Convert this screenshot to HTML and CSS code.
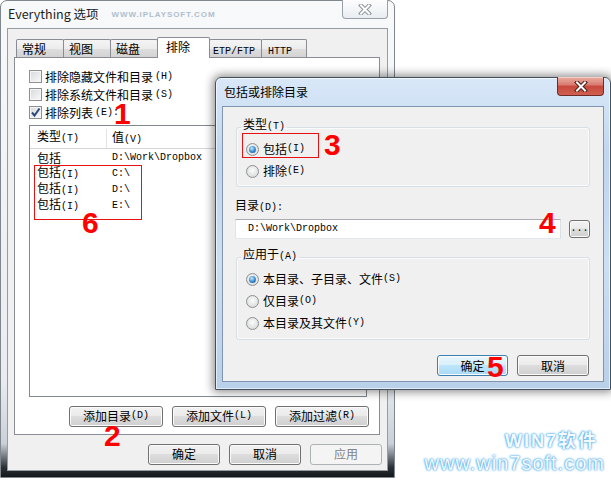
FILE: index.html
```html
<!DOCTYPE html>
<html lang="zh-CN">
<head>
    <meta charset="UTF-8">
    <title>Everything 选项</title>
    <link rel="stylesheet" href="styles.css">
</head>
<body>
<div class="desk">

    <!-- fenetre principale : options -->
    <div class="win main">
        <div class="titlebar">
            <span class="title">Everything 选项</span>
            <span class="site">WWW.IPLAYSOFT.COM</span>
            <div class="close idle">
                <svg width="14" height="11" viewBox="0 0 14 11"><path d="M3 1.5 L11 9.5 M11 1.5 L3 9.5" stroke="#8d939a" stroke-width="4" stroke-linecap="square"/><path d="M3 1.5 L11 9.5 M11 1.5 L3 9.5" stroke="#fff" stroke-width="2" stroke-linecap="square"/></svg>
            </div>
        </div>
        <div class="client">
            <div class="tabs">
                <div class="tab">常规</div>
                <div class="tab">视图</div>
                <div class="tab">磁盘</div>
                <div class="tab on">排除</div>
                <div class="tab w"><span class="m">ETP/FTP</span></div>
                <div class="tab h"><span class="m">HTTP</span></div>
            </div>
            <div class="panel">
                <div class="chk-row"><span class="check"></span>排除隐藏文件和目录<span class="m sp">(H)</span></div>
                <div class="chk-row"><span class="check"></span>排除系统文件和目录<span class="m sp">(S)</span></div>
                <div class="chk-row">
                    <span class="check"><svg width="11" height="11" viewBox="0 0 11 11"><path d="M2 5.5 L4.5 8.5 L9.5 1.5" fill="none" stroke="#2d4a78" stroke-width="2"/></svg></span>排除列表<span class="m sp">(E):</span>
                </div>
                <div class="list">
                    <div class="list-head">
                        <div class="c1">类型<span class="m">(T)</span></div>
                        <div class="c2">值<span class="m">(V)</span></div>
                    </div>
                    <div class="list-row"><div class="c1">包括</div><div class="c2 m">D:\Work\Dropbox</div></div>
                    <div class="list-row"><div class="c1">包括<span class="m">(I)</span></div><div class="c2 m">C:\</div></div>
                    <div class="list-row"><div class="c1">包括<span class="m">(I)</span></div><div class="c2 m">D:\</div></div>
                    <div class="list-row"><div class="c1">包括<span class="m">(I)</span></div><div class="c2 m">E:\</div></div>
                </div>
                <div class="btn-row panel-btns">
                    <button class="btn big">添加目录<span class="m">(D)</span></button>
                    <button class="btn big">添加文件<span class="m">(L)</span></button>
                    <button class="btn big">添加过滤<span class="m">(R)</span></button>
                </div>
            </div>
            <div class="btn-row main-btns">
                <button class="btn mid">确定</button>
                <button class="btn mid">取消</button>
                <button class="btn mid off">应用</button>
            </div>
        </div>
    </div>

    <!-- boite de dialogue : inclure / exclure -->
    <div class="win dlg">
        <div class="titlebar dlg-bar">
            <span class="title">包括或排除目录</span>
            <div class="close hot">
                <svg width="14" height="11" viewBox="0 0 14 11"><path d="M3 1.5 L11 9.5 M11 1.5 L3 9.5" stroke="#4a1c18" stroke-width="4" stroke-linecap="square"/><path d="M3 1.5 L11 9.5 M11 1.5 L3 9.5" stroke="#fff" stroke-width="2" stroke-linecap="square"/></svg>
            </div>
        </div>
        <div class="client dlg-client">
            <fieldset class="group g1">
                <legend>类型<span class="m">(T)</span></legend>
                <div class="rad-row"><span class="radio on"></span>包括<span class="m">(I)</span></div>
                <div class="rad-row"><span class="radio"></span>排除<span class="m">(E)</span></div>
            </fieldset>
            <div class="field-label">目录<span class="m">(D):</span></div>
            <div class="path-row">
                <div class="edit m">D:\Work\Dropbox</div>
                <button class="btn dots"><span class="m">...</span></button>
            </div>
            <fieldset class="group g2">
                <legend>应用于<span class="m">(A)</span></legend>
                <div class="rad-row"><span class="radio on"></span>本目录、子目录、文件<span class="m">(S)</span></div>
                <div class="rad-row"><span class="radio"></span>仅目录<span class="m">(O)</span></div>
                <div class="rad-row"><span class="radio"></span>本目录及其文件<span class="m">(Y)</span></div>
            </fieldset>
            <div class="btn-row dlg-btns">
                <button class="btn ok def">确定</button>
                <button class="btn cancel">取消</button>
            </div>
        </div>
    </div>

    <!-- annotations rouges -->
    <div class="mark-box box6"></div>
    <div class="mark-box box3"></div>
    <span class="num n1">1</span>
    <span class="num n2">2</span>
    <span class="num n3">3</span>
    <span class="num n4">4</span>
    <span class="num n5">5</span>
    <span class="num n6">6</span>

    <div class="stamp">
        <div class="stamp-top">WIN7软件</div>
        <div class="stamp-url">www.win7soft.com</div>
    </div>
</div>
</body>
</html>
```

FILE: styles.css
```css
* {
    box-sizing: border-box;
}
body {
    margin: 0;
    background: #fff;
    font: 12px/14px "Noto Sans CJK SC", sans-serif;
    color: #000;
}
.desk {
    position: relative;
    width: 611px;
    height: 481px;
    overflow: hidden;
}
/* texte latin en demi-chasse, comme SimSun */
.m {
    font-family: "Liberation Mono", monospace;
    font-size: 10px;
}
.sp {
    margin-left: 2px;
}

/* fenetres */
.win {
    position: absolute;
    display: flex;
    flex-direction: column;
}
.main {
    left: 0;
    top: 0;
    width: 395px;
    height: 478px;
    padding: 0 6px 6px;
    border: 1px solid #80868d;
    border-radius: 7px 7px 0 0;
    background: linear-gradient(#f8f9fa 0, #e8ecf0 80%, #c9d0d7 93%, #2a3036 98%, #14181c 100%);
}
.titlebar {
    height: 27px;
    display: flex;
    align-items: center;
    padding-left: 1px;
}
.title {
    font-size: 12.5px;
    color: #1e1e1e;
}
.site {
    margin-left: 13px;
    font: bold 8px "Liberation Sans", sans-serif;
    letter-spacing: 0.9px;
    color: #aebfd0;
}
.close {
    margin-left: auto;
    align-self: flex-start;
    margin-top: -1px;
    width: 46px;
    height: 19px;
    border: 1px solid #9aa0a8;
    border-top: none;
    border-radius: 0 0 4px 4px;
    display: flex;
    align-items: center;
    justify-content: center;
}
.close.idle {
    background: linear-gradient(#fdfdfe, #e9edf1);
}
.close.hot {
    width: 47px;
    border-color: #6e2c28;
    background: linear-gradient(#eab0a3 0, #d9786d 45%, #c7473c 50%, #d0604f 100%);
    box-shadow: inset 0 1px 0 rgba(255, 255, 255, 0.4);
}
.client {
    height: 444px;
    background: #f0f0f0;
    border: 1px solid #979ca3;
    display: flex;
    flex-direction: column;
}

/* onglets */
.tabs {
    display: flex;
    align-items: flex-end;
    height: 20px;
    margin-top: 8px;
    padding-left: 8px;
}
.tab {
    width: 48px;
    height: 18px;
    margin-right: -1px;
    padding: 2px 0 0 5px;
    border: 1px solid #898c95;
    border-bottom: none;
    border-radius: 2px 2px 0 0;
    background: linear-gradient(#f4f4f4, #ececec 50%, #dedede 51%, #d3d3d3);
}
.tab.on {
    position: relative;
    z-index: 1;
    width: 53px;
    height: 21px;
    margin-bottom: -1px;
    padding: 2px 0 0 8px;
    background: #fff;
}
.tab.w {
    width: 53px;
    padding-left: 3px;
}
.tab.h {
    width: 46px;
    padding-left: 6px;
}
.panel {
    width: 366px;
    height: 378px;
    margin-left: 6px;
    padding: 10px 0 0 14px;
    border: 1px solid #898c95;
    background: #fff;
    display: flex;
    flex-direction: column;
}
.chk-row {
    height: 18px;
    display: flex;
    align-items: center;
}
.check {
    width: 13px;
    height: 13px;
    margin-right: 3px;
    border: 1px solid #8e8f8f;
    background: linear-gradient(135deg, #d6d8db, #f9f9fa);
    box-shadow: inset 0 0 0 1px #f6f6f6;
    display: flex;
    align-items: center;
    justify-content: center;
}

/* liste */
.list {
    width: 338px;
    height: 272px;
    margin-top: 3px;
    border: 1px solid #828790;
    background: #fff;
}
.list-head {
    height: 23px;
    display: flex;
    align-items: center;
    padding-top: 3px;
    border-bottom: 1px solid #d5d5d5;
}
.list-head .c1 {
    height: 100%;
    border-right: 1px solid #e3e3e3;
}
.list-row {
    height: 16px;
    display: flex;
    align-items: center;
}
.list-head + .list-row {
    margin-top: 1px;
}
.c1 {
    width: 77px;
    padding-left: 7px;
}
.c2 {
    padding-left: 5px;
}

/* boutons */
.btn-row {
    display: flex;
    justify-content: flex-end;
    gap: 9px;
}
.btn {
    height: 21px;
    padding: 0;
    border: 1px solid #707070;
    border-radius: 3px;
    background: linear-gradient(#f2f2f2 0, #ebebeb 45%, #dddddd 50%, #cfcfcf 100%);
    box-shadow: inset 0 0 0 1px #fbfbfb;
    font: 12px/14px "Noto Sans CJK SC", sans-serif;
    color: #000;
    display: flex;
    align-items: center;
    justify-content: center;
}
.btn.def {
    border-color: #3c7fb1;
    background: linear-gradient(#eaf6fd 0, #d9f0fc 45%, #bee6fd 50%, #a7d9f5 100%);
}
.btn.off {
    border-color: #adb2b5;
    background: #f4f4f4;
    box-shadow: none;
    color: #838383;
}
.big {
    width: 94px;
}
.mid {
    width: 72px;
}
.panel-btns {
    margin-top: 9px;
    padding-right: 10px;
}
.main-btns {
    margin-top: 9px;
    padding-right: 5px;
}

/* dialogue */
.dlg {
    left: 215px;
    top: 77px;
    width: 396px;
    height: 313px;
    padding: 0 6px 7px;
    border: 1px solid #44505e;
    border-radius: 6px 6px 0 0;
    background: linear-gradient(#d9e8f8 0, #c0d6ef 25%, #cbdef3 60%, #b9d0ea 100%);
    box-shadow: 0 0 10px 2px rgba(0, 0, 0, 0.45), inset 0 0 0 1px rgba(255, 255, 255, 0.6);
}
.dlg-bar {
    height: 28px;
    padding-left: 2px;
}
.dlg-bar .title {
    font-size: 12px;
    color: #000;
}
.dlg-client {
    height: 276px;
    border-color: #8196ae;
}
.group {
    margin: 0 13px;
    padding: 0 0 4px 9px;
    border: 1px solid #d5dfe5;
    border-radius: 3px;
    box-shadow: inset 0 0 0 1px #fafbfc;
}
.group legend {
    margin-left: -5px;
    padding: 0 2px 4px;
    line-height: 14px;
}
.g1 {
    margin-top: 10px;
}
.g2 {
    margin-top: 8px;
    padding-bottom: 5px;
}
.rad-row {
    height: 22px;
    display: flex;
    align-items: center;
}
.radio {
    width: 13px;
    height: 13px;
    margin-right: 4px;
    border-radius: 50%;
    border: 1px solid #8e8f8f;
    background: radial-gradient(circle at 50% 40%, #fbfbfb, #d2d4d6);
    display: flex;
    align-items: center;
    justify-content: center;
}
.radio.on::after {
    content: "";
    width: 7px;
    height: 7px;
    border-radius: 50%;
    background: radial-gradient(circle at 40% 35%, #c3ecff, #3585cc 55%, #1b4c8c);
}
.field-label {
    margin: 11px 0 0 12px;
}
.path-row {
    margin: 4px 13px 0 12px;
    display: flex;
    align-items: center;
    gap: 8px;
}
.edit {
    flex: 1;
    height: 20px;
    padding-left: 12px;
    line-height: 18px;
    background: #fff;
    border: 1px solid;
    border-color: #abadb3 #dbdfe6 #e3e9ef #e2e3ea;
}
.dots {
    width: 21px;
    height: 18px;
}
.dlg-btns {
    margin-top: 15px;
    padding-right: 14px;
}
.ok {
    width: 71px;
}
.cancel {
    width: 72px;
}

/* annotations */
.mark-box {
    position: absolute;
    border: 1px solid #e81010;
}
.box6 {
    left: 34px;
    top: 165px;
    width: 108px;
    height: 55px;
}
.box3 {
    left: 242px;
    top: 133px;
    width: 77px;
    height: 25px;
}
.num {
    position: absolute;
    font: bold 30px/30px "Liberation Sans", Arial, sans-serif;
    color: #f00;
}
.n1 { left: 114px; top: 99px; }
.n2 { left: 104px; top: 421px; }
.n3 { left: 324px; top: 130px; }
.n4 { left: 539px; top: 208px; }
.n5 { left: 487px; top: 352px; }
.n6 { left: 82px; top: 208px; }

/* filigrane */
.stamp {
    position: absolute;
    right: 6px;
    top: 430px;
    display: flex;
    flex-direction: column;
    align-items: flex-end;
    color: #f4fbff;
    text-shadow: 0 0 2px #4ba6e6, 0 0 3px #6cbcf0, 0 0 1px #3b96dc;
}
.stamp-top {
    margin-right: 7px;
    font: bold 18px/22px "Liberation Sans", "Noto Sans CJK SC", sans-serif;
    letter-spacing: 2px;
}
.stamp-url {
    font: 20px/22px "Liberation Sans", sans-serif;
    letter-spacing: 1px;
}
```
